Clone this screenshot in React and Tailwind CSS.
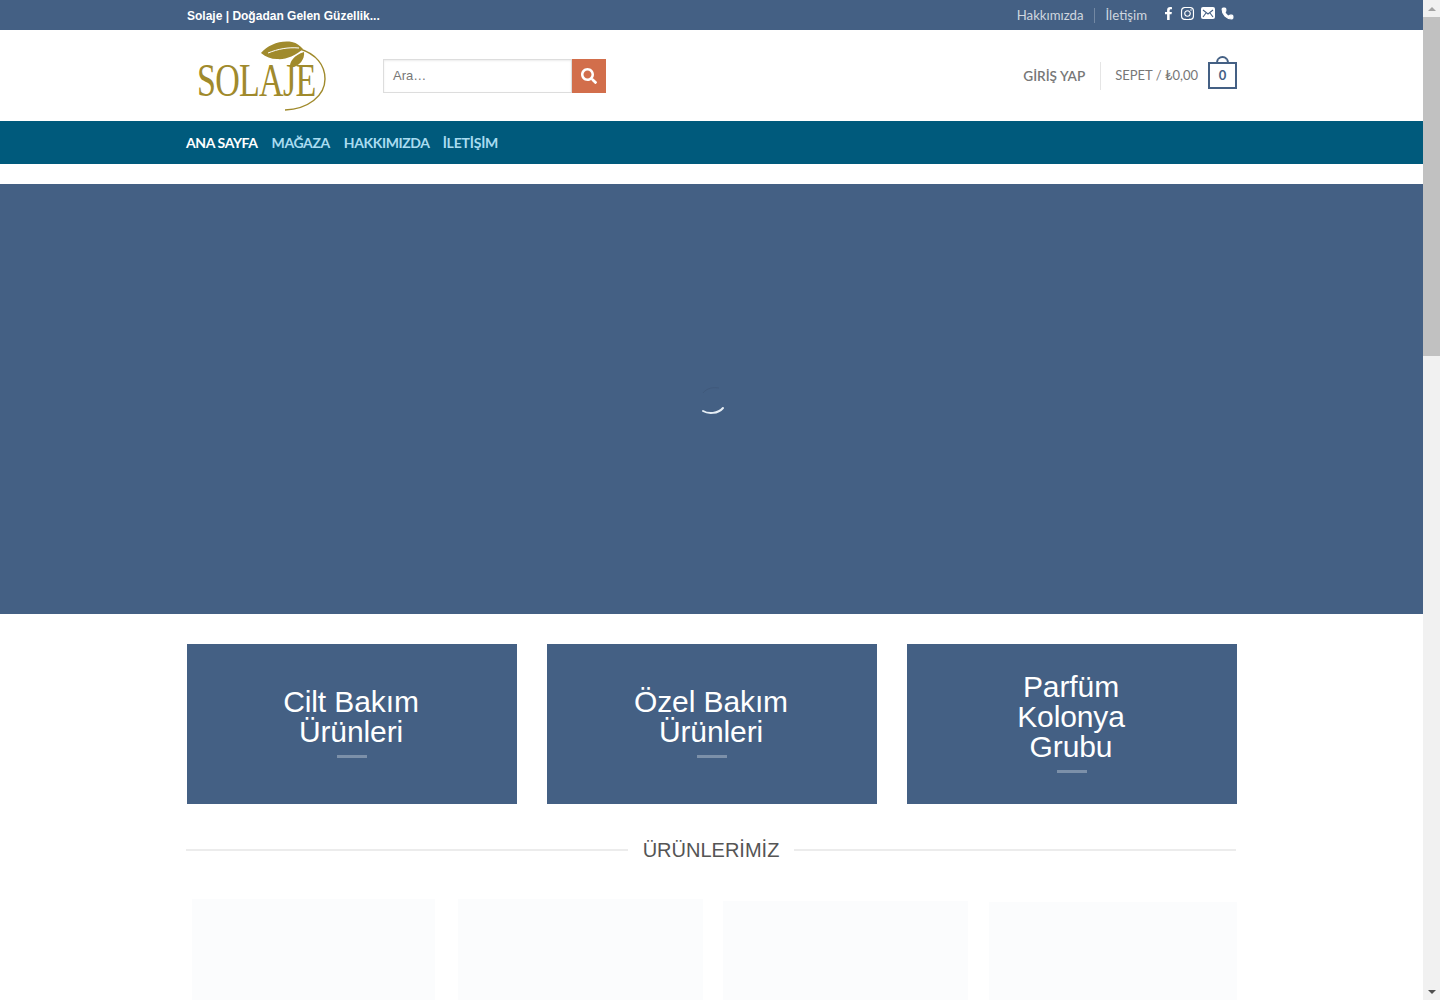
import { Phone } from "lucide-react";
import { FaFacebookF, FaInstagram, FaSearch } from "react-icons/fa";

function Logo() {
  return (
    <div className="relative w-[140px] h-[72px] ml-[9px] font-['Liberation_Serif',serif]">
      <svg className="absolute left-0 top-0" width="140" height="72" viewBox="0 0 140 72" fill="none">
        <path d="M65 13C72 5 84 0 96 2C101 3 104 6 107 9C99 16 89 20 81 19C75 19 70 17 65 13Z" fill="#a08a2c" />
        <path d="M72 13C82 9 92 7 103 8" stroke="#fff" strokeWidth="1" />
        <path d="M94 28C93 22 98 15 108 12C109 19 104 26 94 28Z" fill="#a08a2c" />
        <path d="M104 9C120 14 129 25 129 39C129 56 112 69 89 70" stroke="#a08a2c" strokeWidth="1.4" />
      </svg>
      <span className="absolute left-[1px] top-[16px] text-[46px] leading-[50px] tracking-[-1px] text-[#a08a2c] origin-left scale-x-[0.74] whitespace-nowrap">SOLAJE</span>
    </div>
  );
}

function CategoryCard({ lines }) {
  return (
    <div className="w-[330px] h-[160px] bg-[#446084] pb-[4px] flex flex-col items-center justify-center text-white">
      <div className="text-center text-[30px] leading-[30px] tracking-[-0.1px] pr-[2px] font-['Liberation_Sans',sans-serif]">
        {lines.map((l) => (
          <div key={l}>{l}</div>
        ))}
      </div>
      <div className="w-[30px] h-[3px] bg-white/30 mt-[8px]" />
    </div>
  );
}

export default function App() {
  return (
    <div className="flex h-[1000px] overflow-hidden bg-white font-['Lato',sans-serif]">
      <div className="w-[1423px] shrink-0">
        {/* top bar */}
        <div className="h-[30px] bg-[#446084]">
          <div className="w-[1050px] ml-[187px] h-full flex items-center justify-between">
            <span className="text-[12px] font-bold text-white mt-px font-['Liberation_Sans',sans-serif]">Solaje | Doğadan Gelen Güzellik...</span>
            <div className="flex items-center text-[13.2px] text-white/75 mt-px">
              <span>Hakkımızda</span>
              <span className="w-px h-[15px] bg-white/25 ml-[10px] mr-[11px]" />
              <span>İletişim</span>
              <div className="flex items-center ml-[15px] mr-[3px] text-white -mt-[4px]">
                <FaFacebookF size={13} />
                <FaInstagram size={15} className="ml-[5px]" />
                <svg width="14" height="12" viewBox="0 0 14 12" fill="none" className="ml-[6px]">
                  <rect width="14" height="12" rx="2" fill="#fff" />
                  <path d="M2 3L7 7L12 3M2 10L5 6M12 10L9 6" stroke="#446084" strokeWidth="1.1" />
                </svg>
                <Phone size={13} fill="currentColor" className="ml-[6px]" />
              </div>
            </div>
          </div>
        </div>

        {/* logo row */}
        <div className="h-[91px] flex items-center">
          <div className="w-[1050px] ml-[187px] flex items-center">
            <Logo />
            <div className="flex ml-[47px]">
              <div className="w-[189px] h-[34px] border border-[#ddd] flex items-center px-[9px] text-[13px] text-[#777] shadow-[inset_0_1px_2px_rgba(0,0,0,0.08)] font-['Liberation_Sans',sans-serif]">Ara…</div>
              <div className="w-[34px] h-[34px] bg-[#d26e4b] flex items-center justify-center">
                <FaSearch size={16} className="text-white" />
              </div>
            </div>
            <div className="ml-auto flex items-center text-[13px] text-[#777]">
              <span className="font-semibold text-[13.6px] mt-px">GİRİŞ YAP</span>
              <span className="w-px h-[28px] bg-[#e5e5e5] ml-[15px] mr-[14px]" />
              <span className="mt-px">SEPET / ₺0,00</span>
              <div className="relative w-[29px] h-[27px] border-2 border-[#446084] ml-[10px] flex items-center justify-center text-[13px] font-bold text-[#446084]">
                <span className="absolute -top-[8px] left-[6px] w-[13px] h-[7px] border-2 border-b-0 border-[#446084] rounded-t-full" />
                0
              </div>
            </div>
          </div>
        </div>

        {/* nav */}
        <div className="h-[43px] bg-[#005a7c] flex items-center">
          <div className="ml-[186px] flex gap-[14px] text-[14px] font-bold tracking-[-0.4px] text-[#a9dcf0]">
            <span className="text-white">ANA SAYFA</span>
            <span>MAĞAZA</span>
            <span>HAKKIMIZDA</span>
            <span className="-ml-px tracking-[-0.2px]">İLETİŞİM</span>
          </div>
        </div>

        {/* hero */}
        <div className="mt-[20px] h-[430px] bg-[#446084] flex items-center justify-center">
          <svg width="40" height="40" viewBox="0 0 40 40" fill="none" className="ml-[3px] mt-[3px]">
            <path d="M10 12C14 7 20 6 26 7" stroke="#40597b" strokeWidth="1" />
            <path d="M10 30C15 33 25 33 30 27" stroke="#e6eef5" strokeWidth="2" strokeLinecap="round" />
          </svg>
        </div>

        {/* categories */}
        <div className="w-[1050px] ml-[187px] mt-[30px] flex justify-between">
          <CategoryCard lines={["Cilt Bakım", "Ürünleri"]} />
          <CategoryCard lines={["Özel Bakım", "Ürünleri"]} />
          <CategoryCard lines={["Parfüm", "Kolonya", "Grubu"]} />
        </div>

        {/* heading */}
        <div className="w-[1050px] ml-[186px] mt-[31px] flex items-center gap-[15px]">
          <div className="flex-1 h-[2px] bg-[#ececec]" />
          <span className="text-[20px] leading-[30px] text-[#555] font-['Liberation_Sans',sans-serif]">ÜRÜNLERİMİZ</span>
          <div className="flex-1 h-[2px] bg-[#ececec]" />
        </div>

        {/* product placeholders */}
        <div className="ml-[192px] mt-[34px] flex items-start">
          <div className="w-[243px] h-[120px] bg-[#fbfcfd]" />
          <div className="w-[245px] h-[120px] ml-[23px] bg-[#fbfcfd]" />
          <div className="w-[245px] h-[120px] ml-[20px] mt-[2px] bg-[#fbfcfd]" />
          <div className="w-[248px] h-[120px] ml-[21px] mt-[3px] bg-[#fbfcfd]" />
        </div>
      </div>

      {/* browser scrollbar */}
      <div className="w-[17px] shrink-0 bg-[#f1f1f1] flex flex-col items-center">
        <div className="h-[17px] flex items-center justify-center">
          <div className="w-0 h-0 border-x-[4px] border-x-transparent border-b-[4px] border-b-[#a3a3a3]" />
        </div>
        <div className="w-full h-[339px] bg-[#c1c1c1]" />
        <div className="mt-auto h-[17px] flex items-center justify-center">
          <div className="w-0 h-0 border-x-[4px] border-x-transparent border-t-[4px] border-t-[#505050]" />
        </div>
      </div>
    </div>
  );
}
